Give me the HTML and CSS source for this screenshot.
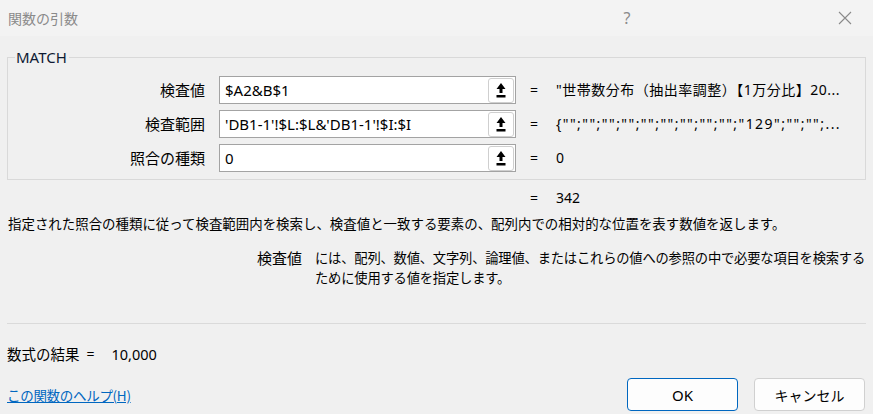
FILE: index.html
```html
<!DOCTYPE html>
<html lang="ja">
<head>
<meta charset="utf-8">
<title>関数の引数</title>
<link rel="stylesheet" href="styles.css">
</head>
<body>
<div class="window">
  <div class="titlebar">
    <span class="title">関数の引数</span>
    <span class="help">?</span>
    <span class="close">
      <svg width="14" height="14" viewBox="0 0 14 14"><path d="M1 1 L13 13 M13 1 L1 13" stroke="#8a8a8a" stroke-width="1.1" fill="none"/></svg>
    </span>
  </div>
  <div class="content">
    <fieldset class="group">
      <legend>MATCH</legend>
      <div class="args">
        <label class="lbl">検査値</label>
        <div class="field"><span class="val">$A2&amp;B$1</span><span class="pick"><svg width="10" height="15" viewBox="0 0 10 15"><path d="M5 0 L9.5 6 L6.5 6 L6.5 10 L3.5 10 L3.5 6 L0.5 6 Z" fill="#000"/><rect x="0.5" y="12" width="9" height="2.5" fill="#000"/></svg></span></div>
        <span class="eq">=</span>
        <span class="res r1">"世帯数分布（抽出率調整）【1万分比】20...</span>

        <label class="lbl">検査範囲</label>
        <div class="field"><span class="val">'DB1-1'!$L:$L&amp;'DB1-1'!$I:$I</span><span class="pick"><svg width="10" height="15" viewBox="0 0 10 15"><path d="M5 0 L9.5 6 L6.5 6 L6.5 10 L3.5 10 L3.5 6 L0.5 6 Z" fill="#000"/><rect x="0.5" y="12" width="9" height="2.5" fill="#000"/></svg></span></div>
        <span class="eq">=</span>
        <span class="res r2">{"";"";"";"";"";"";"";"";"";"129";"";"";...</span>

        <label class="lbl">照合の種類</label>
        <div class="field"><span class="val">0</span><span class="pick"><svg width="10" height="15" viewBox="0 0 10 15"><path d="M5 0 L9.5 6 L6.5 6 L6.5 10 L3.5 10 L3.5 6 L0.5 6 Z" fill="#000"/><rect x="0.5" y="12" width="9" height="2.5" fill="#000"/></svg></span></div>
        <span class="eq">=</span>
        <span class="res">0</span>
      </div>
    </fieldset>

    <div class="total"><span class="eq">=</span><span class="res">342</span></div>

    <p class="desc">指定された照合の種類に従って検査範囲内を検索し、検査値と一致する要素の、配列内での相対的な位置を表す数値を返します。</p>

    <div class="argdesc">
      <span class="argname">検査値</span>
      <span class="argtext">には、配列、数値、文字列、論理値、またはこれらの値への参照の中で必要な項目を検索する<br>ために使用する値を指定します。</span>
    </div>

    <div class="sep"></div>

    <div class="result"><span class="reslabel">数式の結果</span><span class="reseq">=</span><span class="resval">10,000</span></div>

    <div class="footer">
      <a class="helplink" href="#">この関数のヘルプ(H)</a>
      <div class="buttons">
        <button class="btn primary">OK</button>
        <button class="btn">キャンセル</button>
      </div>
    </div>
  </div>
</div>
</body>
</html>
```

FILE: styles.css
```css
* { box-sizing: border-box; }
html, body {
  margin: 0;
  padding: 0;
  width: 873px;
  height: 414px;
  overflow: hidden;
  background: #f0f0f0;
}
body {
  font-family: "Noto Sans", "Noto Sans CJK JP", sans-serif;
  font-size: 14px;
  color: #000;
}
.window {
  width: 873px;
  height: 414px;
  display: flex;
  flex-direction: column;
}
.titlebar {
  height: 36px;
  background: #f3f3f3;
  display: flex;
  align-items: center;
  padding-left: 8px;
  color: #8a8a8a;
  flex-shrink: 0;
}
.title {
  font-family: "Noto Sans CJK JP", sans-serif;
  font-size: 14px;
  flex: 1;
  line-height: 20px;
}
.help {
  font-size: 16px;
  width: 20px;
  margin-right: 201px;
  text-align: center;
  line-height: 20px;
}
.close {
  width: 14px;
  height: 14px;
  margin-right: 21px;
  display: flex;
}
.content {
  flex: 1;
  padding: 12px 7px 0 7px;
  display: flex;
  flex-direction: column;
}
.group {
  margin: 0;
  border: 1px solid #d9d9d9;
  padding: 10px 0 7px 0;
  min-width: 0;
}
.group legend {
  margin-left: 7px;
  padding: 0 2px 0 1px;
  font-size: 15px;
  line-height: 18px;
  color: #0e1a33;
}
.args {
  display: grid;
  grid-template-columns: 197px 297px 12px 1fr;
  column-gap: 14px;
  row-gap: 6px;
  align-items: center;
}
.lbl {
  font-family: "Noto Sans CJK JP", sans-serif;
  font-size: 15px;
  text-align: right;
  line-height: 20px;
}
.field {
  height: 28px;
  background: #fff;
  border: 1px solid #a3a3a3;
  display: flex;
  align-items: center;
  padding: 0 1px 0 5px;
}
.val {
  flex: 1;
  font-size: 15px;
  line-height: 20px;
  white-space: nowrap;
  overflow: hidden;
}
.pick {
  width: 26px;
  height: 25px;
  border: 1px solid #cfcfcf;
  border-radius: 3px;
  background: #fff;
  display: flex;
  align-items: center;
  justify-content: center;
}
.eq {
  font-size: 14px;
  line-height: 20px;
}
.res {
  font-size: 14px;
  line-height: 20px;
  white-space: nowrap;
}
.res.r1 { letter-spacing: 0.5px; }
.res.r2 { letter-spacing: 1.45px; }
.total {
  display: flex;
  padding-left: 523px;
  margin-top: 8px;
  line-height: 20px;
}
.total .eq { width: 12px; }
.total .res { margin-left: 14px; }
.desc {
  margin: 5px 0 0 1px;
  font-family: "Noto Sans CJK JP", sans-serif;
  font-size: 13.45px;
  line-height: 20px;
  white-space: nowrap;
}
.argdesc {
  display: flex;
  margin-top: 15px;
  font-family: "Noto Sans CJK JP", sans-serif;
  font-size: 13.3px;
  line-height: 20px;
}
.argname {
  width: 308px;
  text-align: right;
  padding-right: 13px;
  font-size: 15px;
  flex-shrink: 0;
}
.argtext { white-space: nowrap; letter-spacing: -0.2px; }
.sep {
  margin-top: 35px;
  height: 1px;
  background: #dadada;
}
.result {
  margin-top: 20px;
  display: flex;
  align-items: center;
  line-height: 20px;
  font-family: "Noto Sans CJK JP", sans-serif;
}
.reslabel { font-size: 14.5px; }
.reseq { margin-left: 7px; font-family: "Noto Sans", sans-serif; font-size: 14px; }
.resval { margin-left: 17px; font-family: "Noto Sans", sans-serif; font-size: 14.5px; }
.footer {
  margin-top: 14px;
  display: flex;
  align-items: center;
  justify-content: space-between;
}
.helplink {
  font-family: "Noto Sans CJK JP", sans-serif;
  color: #0067c0;
  font-size: 13.5px;
  letter-spacing: -0.3px;
  line-height: 20px;
}
.buttons {
  display: flex;
  gap: 16px;
  margin-right: 1px;
}
.btn {
  width: 111px;
  height: 33px;
  background: #fdfdfd;
  border: 1px solid #d0d0d0;
  border-radius: 4px;
  font-family: "Noto Sans CJK JP", sans-serif;
  font-size: 14px;
  color: #000;
  padding: 0;
}
.btn.primary {
  border-color: #0067c0;
  font-family: "Noto Sans", sans-serif;
  font-size: 15px;
}
```
